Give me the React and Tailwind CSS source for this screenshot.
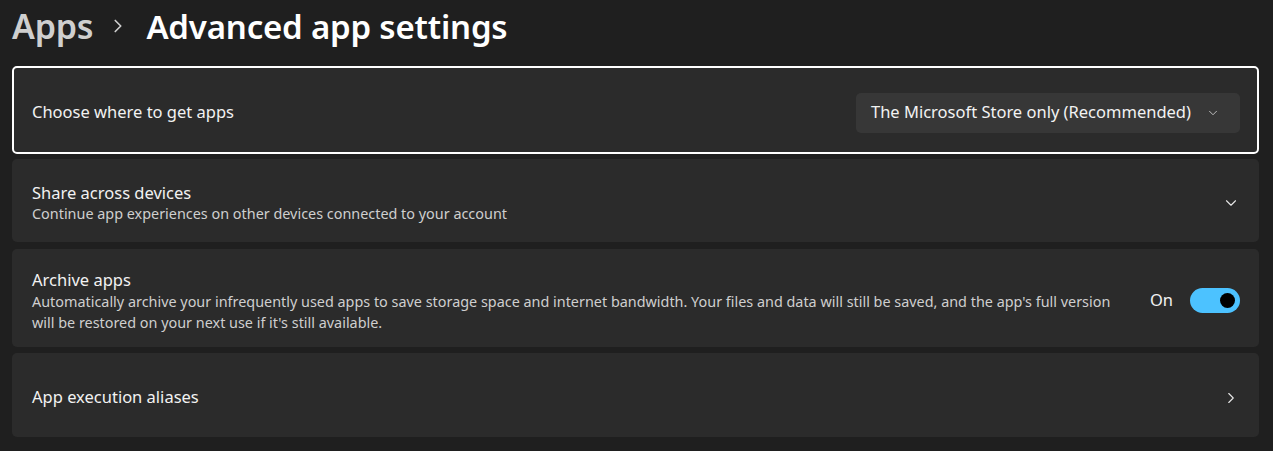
import { ChevronDown, ChevronRight } from "lucide-react";

function Card({ className = "", children }) {
  return (
    <div
      className={`flex items-center justify-between rounded-[5px] bg-[#2b2b2b] pt-[5px] ${className}`}
    >
      {children}
    </div>
  );
}

export default function App() {
  return (
    <div
      className="h-[451px] w-[1273px] overflow-hidden bg-[#1f1f1f] text-white"
      style={{ fontFamily: '"Noto Sans", "Open Sans", sans-serif' }}
    >
      <div className="flex h-[52px] items-center pl-[12px]">
        <span className="text-[34px] font-semibold leading-none tracking-[-0.2px] text-[#cfcfcf]">
          Apps
        </span>
        <ChevronRight className="ml-[14px] mr-[17px] h-[22px] w-[22px] text-[#cfcfcf]" strokeWidth={1.8} />
        <span className="text-[33px] font-semibold leading-none tracking-[-0.2px] text-white">
          Advanced app settings
        </span>
      </div>

      <div className="ml-[12px] mr-[14px] mt-[14px] flex flex-col">
        <Card className="h-[88px] border-2 border-white pl-[18px] pr-[17px]">
          <span className="text-[16.5px] text-[#f2f2f2]">Choose where to get apps</span>
          <button
            type="button"
            className="flex h-[40px] w-[384px] items-center justify-between rounded-[5px] bg-[#373737] pl-[15px] pr-[20px] text-[16.5px] text-[#f2f2f2]"
          >
            <span>The Microsoft Store only (Recommended)</span>
            <ChevronDown className="h-[14px] w-[14px] text-[#cfcfcf]" strokeWidth={1.5} />
          </button>
        </Card>

        <Card className="mt-[5px] h-[83px] pl-[20px] pr-[19px]">
          <div className="flex flex-col">
            <span className="text-[16.5px] leading-[22px] text-[#f2f2f2]">Share across devices</span>
            <span className="text-[14.4px] leading-[20px] text-[#cfcfcf]">
              Continue app experiences on other devices connected to your account
            </span>
          </div>
          <ChevronDown className="h-[18px] w-[18px] text-[#e6e6e6]" strokeWidth={1.5} />
        </Card>

        <Card className="mt-[7px] h-[98px] pl-[20px] pr-[19px]">
          <div className="flex max-w-[1100px] flex-col">
            <span className="text-[16.5px] leading-[22px] text-[#f2f2f2]">Archive apps</span>
            <span className="text-[14.4px] leading-[21px] text-[#cfcfcf]">
              Automatically archive your infrequently used apps to save storage space and internet bandwidth. Your files and data will still be saved, and the app's full version will be restored on your next use if it's still available.
            </span>
          </div>
          <div className="flex items-center gap-[17px]">
            <span className="text-[16.5px] text-[#f2f2f2]">On</span>
            <div className="flex h-[25px] w-[50px] items-center justify-end rounded-full bg-[#4cc2ff] pr-[5px]">
              <div className="h-[15px] w-[15px] rounded-full bg-black" />
            </div>
          </div>
        </Card>

        <Card className="mt-[6px] h-[84px] pl-[20px] pr-[19px]">
          <span className="text-[16.5px] text-[#f2f2f2]">App execution aliases</span>
          <ChevronRight className="h-[18px] w-[18px] text-[#e6e6e6]" strokeWidth={1.5} />
        </Card>
      </div>
    </div>
  );
}
